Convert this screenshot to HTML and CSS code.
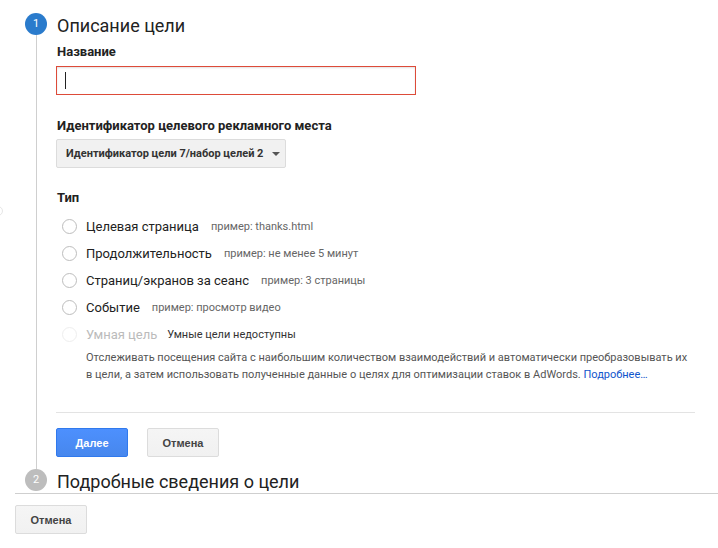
FILE: index.html
```html
<!DOCTYPE html>
<html lang="ru">
<head>
<meta charset="utf-8">
<title>Цели</title>
<link rel="stylesheet" href="styles.css">
</head>
<body>
<div class="page">
  <span class="edge-dot"></span>
  <div class="scroll">
    <div class="step step-first">
      <div class="rail">
        <span class="num num-active">1</span>
        <span class="rail-line"></span>
      </div>
      <div class="step-body">
        <h2 class="step-title">Описание цели</h2>
        <div class="field-label">Название</div>
        <div class="text-input"><span class="caret-cursor"></span></div>
        <div class="field-label label-id">Идентификатор целевого рекламного места</div>
        <div class="select">Идентификатор цели 7/набор целей 2 <span class="tri"></span></div>
        <div class="field-label label-type">Тип</div>
        <ul class="radios">
          <li class="radio"><span class="circle"></span><span class="r-name">Целевая страница</span><span class="r-hint">пример: thanks.html</span></li>
          <li class="radio"><span class="circle"></span><span class="r-name">Продолжительность</span><span class="r-hint">пример: не менее 5 минут</span></li>
          <li class="radio"><span class="circle"></span><span class="r-name">Страниц/экранов за сеанс</span><span class="r-hint">пример: 3 страницы</span></li>
          <li class="radio"><span class="circle"></span><span class="r-name">Событие</span><span class="r-hint">пример: просмотр видео</span></li>
          <li class="radio radio-disabled"><span class="circle"></span><span class="r-name">Умная цель</span><span class="r-note">Умные цели недоступны</span></li>
        </ul>
        <p class="desc">Отслеживать посещения сайта с наибольшим количеством взаимодействий и автоматически преобразовывать их в цели, а затем использовать полученные данные о целях для оптимизации ставок в AdWords. <a class="more" href="#">Подробнее…</a></p>
        <div class="actions">
          <button class="btn btn-primary">Далее</button>
          <button class="btn">Отмена</button>
        </div>
      </div>
    </div>
    <div class="step step-second">
      <div class="rail">
        <span class="num">2</span>
      </div>
      <div class="step-body">
        <h2 class="step-title">Подробные сведения о цели</h2>
      </div>
    </div>
  </div>
  <div class="footer">
    <button class="btn">Отмена</button>
  </div>
</div>
</body>
</html>
```
FILE: styles.css
```css
* { box-sizing: border-box; }
html, body { margin: 0; padding: 0; background: #fff; }
body { font-family: Roboto, "Liberation Sans", Arial, sans-serif; color: #222; }

.page { position: relative; width: 718px; height: 548px; overflow: hidden; }

.edge-dot {
  position: absolute; left: -7px; top: 206px;
  width: 10px; height: 10px; border-radius: 50%;
  border: 1px solid #e6e6e6;
}

.scroll { height: 493px; overflow: hidden; }

.step { display: flex; padding-left: 25px; }
.rail { width: 22px; display: flex; flex-direction: column; align-items: center; flex: none; }
.step-first .rail { padding-top: 13px; }

.num {
  width: 22px; height: 22px; border-radius: 50%;
  background: #bdbdbd; color: #fff;
  font: 11px/22px Roboto, "Liberation Sans", sans-serif;
  text-align: center; flex: none;
}
.num-active { background: #2a7bcc; }
.rail-line { flex: 1; width: 1px; background: #cfcfcf; }

.step-body { flex: 1; padding-left: 9px; padding-right: 23px; }
.step-first .step-body { padding-top: 15px; padding-bottom: 12px; }

.step-title {
  margin: 0 0 0 1px; font-weight: 400; font-size: 18px; line-height: 22px; color: #222;
}

.field-label {
  font-weight: bold; font-size: 13px; line-height: 16px; color: #222;
  margin: 7px 0 0 1px;
}
.label-id { margin-top: 23px; }
.label-type { margin-top: 22px; }

.text-input {
  width: 360px; height: 29px; margin-top: 6px;
  border: 1px solid #dd4b39;
  box-shadow: inset 0 1px 2px rgba(0,0,0,.12);
  padding: 5px 8px;
}
.caret-cursor { display: block; width: 1px; height: 17px; background: #222; }

.select {
  display: flex; align-items: center;
  width: 230px; height: 29px; margin-top: 5px;
  padding: 0 0 0 9px;
  background: #f1f1f1; border: 1px solid #dcdcdc; border-radius: 2px;
  font-weight: bold; font-size: 11px; color: #333; white-space: nowrap;
}
.tri {
  margin-left: 9px; width: 0; height: 0;
  border-left: 4px solid transparent; border-right: 4px solid transparent;
  border-top: 4px solid #555;
}

.radios { list-style: none; margin: 7px 0 0 0; padding: 0 0 0 6px; }
.radio { display: flex; align-items: center; height: 27px; }
.circle {
  width: 15px; height: 15px; border-radius: 50%;
  border: 1px solid #bdbdbd; background: #fff; flex: none;
  margin-right: 9px;
}
.r-name { font-size: 13px; color: #222; }
.r-hint { font-size: 11px; color: #666; margin-left: 12px; }
.r-note { font-size: 11px; color: #333; margin-left: 10px; }
.radio-disabled .circle { border-color: #eee; }
.radio-disabled .r-name { color: #bbb; }

.desc {
  margin: 1px 0 0 30px; width: 604px;
  font-size: 11px; line-height: 17px; color: #555;
}
.more { color: #15c; text-decoration: none; }

.actions {
  margin-top: 29px; padding-top: 15px;
  border-top: 1px solid #e3e3e3;
  width: 639px;
  display: flex; gap: 19px;
}

.btn {
  width: 72px; height: 29px; padding: 0;
  border: 1px solid #dcdcdc; border-radius: 2px;
  background: linear-gradient(#f5f5f5, #f1f1f1);
  font-family: "Liberation Sans", Arial, sans-serif;
  font-weight: bold; font-size: 11px; color: #444;
}
.btn-primary {
  background: linear-gradient(#4d90fe, #4787ed);
  border-color: #3079ed; color: #fff;
}

.step-second .step-body { padding-top: 2px; }

.footer {
  margin-left: 15px; border-top: 1px solid #cfcfcf;
  padding-top: 11px;
}
```
